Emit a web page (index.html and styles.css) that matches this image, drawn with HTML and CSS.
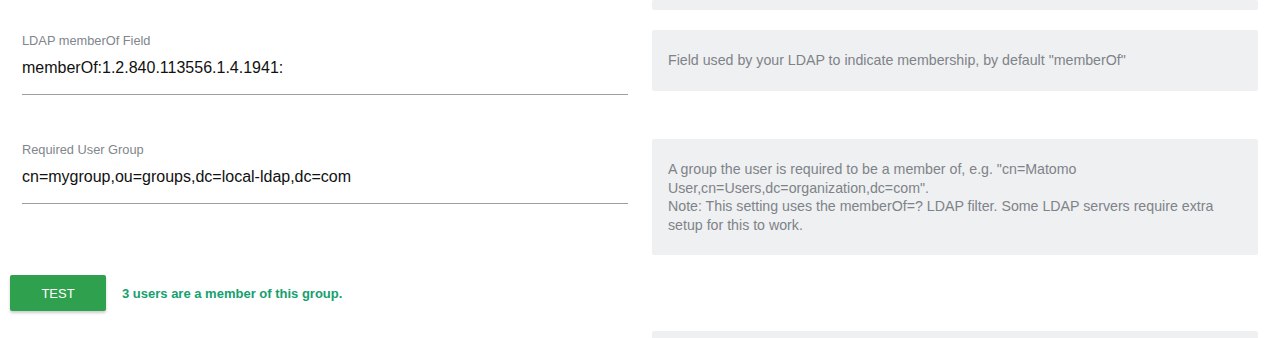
FILE: index.html
```html
<!DOCTYPE html>
<html>
<head>
  <meta charset="UTF-8">
  <title>LDAP settings</title>
  <link rel="stylesheet" href="styles.css">
</head>
<body>
  <div class="settings">
    <div class="setting prev">
      <div class="field"></div>
      <div class="help"></div>
    </div>

    <div class="setting">
      <div class="field">
        <label>LDAP memberOf Field</label>
        <div class="input">memberOf:1.2.840.113556.1.4.1941:</div>
      </div>
      <div class="help">Field used by your LDAP to indicate membership, by default "memberOf"</div>
    </div>

    <div class="setting group">
      <div class="field">
        <label>Required User Group</label>
        <div class="input">cn=mygroup,ou=groups,dc=local-ldap,dc=com</div>
      </div>
      <div class="help">
        A group the user is required to be a member of, e.g. "cn=Matomo User,cn=Users,dc=organization,dc=com".<br>
        Note: This setting uses the memberOf=? LDAP filter. Some LDAP servers require extra setup for this to work.
      </div>
    </div>

    <div class="test-row">
      <button class="btn">Test</button>
      <span class="test-result">3 users are a member of this group.</span>
    </div>

    <div class="setting next">
      <div class="field"></div>
      <div class="help"></div>
    </div>
  </div>
</body>
</html>
```

FILE: styles.css
```css
body {
  margin: 0;
  font-family: "Liberation Sans", Arial, sans-serif;
  background: #fff;
}

.settings {
  width: 1260px;
  margin-left: 10px;
}

.setting {
  display: grid;
  grid-template-columns: 1fr 1fr;
  align-items: start;
  margin-bottom: 44px;
}

.field {
  padding: 0 12px;
}

.field label {
  display: block;
  margin-top: 3px;
  font-size: 12.8px;
  line-height: 15px;
  color: #80868c;
}

.input {
  padding: 10px 0 16px;
  font-size: 16px;
  line-height: 20px;
  color: #111;
  border-bottom: 1px solid #9e9e9e;
}

.help {
  margin: 0 12px;
  padding: 21px 16px;
  background: #eff0f1;
  border-radius: 2px;
  font-size: 14.2px;
  line-height: 18.5px;
  color: #7e8389;
}

.prev {
  margin-bottom: 20px;
}

.prev .help {
  height: 10px;
  padding: 0;
}

.group {
  margin-bottom: 20px;
}

.test-row {
  display: flex;
  align-items: center;
  gap: 16px;
  margin-bottom: 20px;
}

.btn {
  width: 96px;
  height: 36px;
  border: 0;
  border-radius: 2px;
  background: #2fa04e;
  color: #fff;
  font-family: inherit;
  font-size: 13px;
  text-transform: uppercase;
  box-shadow: 0 2px 3px rgba(0, 0, 0, 0.2);
}

.test-result {
  font-size: 13px;
  font-weight: bold;
  color: #15a06e;
}

.next .help {
  height: 30px;
  padding: 0;
}
```
